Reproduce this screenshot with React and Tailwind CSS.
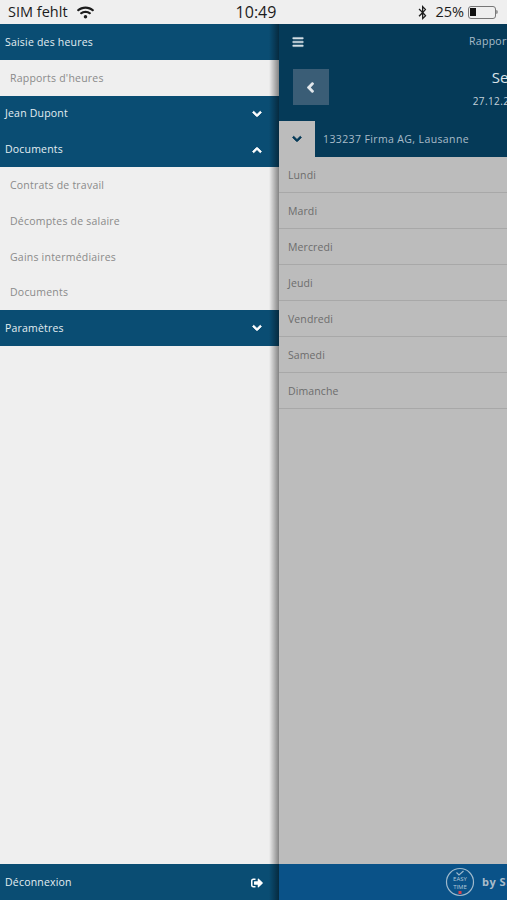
import { FaBars, FaBluetoothB, FaChevronDown, FaChevronLeft, FaChevronUp, FaSignOutAlt, FaWifi } from "react-icons/fa"

const font = { fontFamily: '"Open Sans", sans-serif' }
const docs = ["Contrats de travail", "Décomptes de salaire", "Gains intermédiaires", "Documents"]
const days = ["Lundi", "Mardi", "Mercredi", "Jeudi", "Vendredi", "Samedi", "Dimanche"]

const Head = ({ label, icon }) => (
  <div className="h-[35.75px] shrink-0 flex items-center justify-between pl-[5px] pr-[16px] pt-[1px] bg-[#0a4d73] text-[#e4edf2] text-[10.5px] tracking-[0.2px]">
    <span>{label}</span>
    {icon}
  </div>
)

const Item = ({ label }) => (
  <div className="h-[35.75px] shrink-0 flex items-center pl-[10px] pt-[2px] text-[#8a8a8a] text-[10.5px] tracking-[0.22px]">{label}</div>
)

const Chevron = ({ up }) => {
  const Icon = up ? FaChevronUp : FaChevronDown
  return <Icon className="mr-[1px] text-[10px] text-white" stroke="currentColor" strokeWidth={50} />
}

const EasyTime = () => (
  <svg width="30" height="30" viewBox="0 0 30 30" fill="none">
    <circle cx="15" cy="15" r="13.5" stroke="#9fb9cc" strokeWidth="1.2" />
    <path d="M11.5 5.5l2.5 2.5 4.5-4" stroke="#9fb9cc" strokeWidth="1.2" />
    <text x="15" y="14" textAnchor="middle" fontSize="6" fill="#b5c9d8" fontFamily="Open Sans">EASY</text>
    <text x="15" y="21.5" textAnchor="middle" fontSize="6" fill="#b5c9d8" fontFamily="Open Sans">TIME</text>
    <rect x="13.5" y="24" width="3" height="3" fill="#d9404a" />
  </svg>
)

const App = () => {
  return (
    <div className="w-[507px] h-[900px] flex flex-col overflow-hidden bg-[#efefef]" style={font}>
      {/* status bar */}
      <div className="h-6 shrink-0 flex items-center justify-between pl-[8px] pr-[9px] text-[#1c1c1c] text-[14.5px] bg-[#efefef]">
        <div className="flex items-center gap-[9px] w-[196px]">
          <span>SIM fehlt</span>
          <FaWifi className="text-[17px]" />
        </div>
        <span className="text-[16px] font-medium">10:49</span>
        <div className="flex items-center justify-end w-[190px]">
          <FaBluetoothB className="text-[15px] mr-[5px]" />
          <span>25%</span>
          <div className="ml-[4px] w-[28px] h-[13px] border border-[#777] rounded-[3px] p-[1.5px]">
            <div className="w-[6px] h-full bg-[#111]"></div>
          </div>
          <div className="w-[2px] h-[4px] bg-[#999] rounded-r"></div>
        </div>
      </div>

      <div className="flex flex-1 min-h-0">
        {/* side menu */}
        <div className="relative w-[279px] shrink-0 flex flex-col bg-[#efefef]">
          <Head label="Saisie des heures" />
          <Item label="Rapports d'heures" />
          <Head label="Jean Dupont" icon={<Chevron />} />
          <Head label="Documents" icon={<Chevron up />} />
          {docs.map((item, index) => <Item key={index} label={item} />)}
          <Head label="Paramètres" icon={<Chevron />} />
          <div className="flex-1"></div>
          <Head label="Déconnexion" icon={<FaSignOutAlt className="text-[12px] text-white" />} />
          <div className="absolute top-0 bottom-0 right-0 w-[10px] bg-gradient-to-r from-transparent to-black/45"></div>
        </div>

        {/* main panel, darkened behind the menu */}
        <div className="w-[507px] shrink-0 flex flex-col bg-[#bcbcbc]">
          <div className="h-[133px] shrink-0 flex flex-col bg-[#053a58] text-[#c3d0d9]">
            <div className="h-9 shrink-0 flex items-center text-[10.5px] tracking-[0.3px] text-[#a9bcc9]">
              <FaBars className="ml-[13px] text-[12px] text-[#d5dfe5]" stroke="currentColor" strokeWidth={20} />
              <span className="ml-[165px]">Rapports d'heures</span>
            </div>
            <div className="h-[61px] shrink-0 flex items-start">
              <div className="ml-[14px] mt-[9px] w-9 h-9 bg-[#3a5d76] flex items-center justify-center">
                <FaChevronLeft className="mr-[2px] text-[11px] text-[#e4e9ed]" stroke="currentColor" strokeWidth={50} />
              </div>
              <div className="flex-1 mr-[50px] flex flex-col items-center pt-[7px]">
                <span className="text-[15px] leading-[20px] text-[#dbe3e8]">Semaine 52</span>
                <span className="mt-[6px] text-[10px] leading-[16px] tracking-[0.4px]">27.12.2021 - 02.01.2022</span>
              </div>
            </div>
            <div className="h-9 shrink-0 flex items-center">
              <div className="w-9 h-9 bg-[#bcbcbc] flex items-center justify-center">
                <FaChevronDown className="text-[10px] text-[#053a58]" stroke="currentColor" strokeWidth={50} />
              </div>
              <span className="ml-2 pt-[1px] text-[10.5px] tracking-[0.38px] text-[#a9bcc9]">133237 Firma AG, Lausanne</span>
            </div>
          </div>
          <div className="flex-1">
            {days.map((day, index) => (
              <div key={index} className="h-9 flex items-center pl-[9px] pt-[2px] border-b border-[#a8a8a8] text-[#6c6c6c] text-[10.5px] tracking-[0.1px]">{day}</div>
            ))}
          </div>
          <div className="h-[35.75px] shrink-0 flex items-center bg-[#0a5288] pl-[166px]">
            <EasyTime />
            <span className="ml-[7px] text-[#a9bcc9] text-[11px] font-bold tracking-[0.5px]">by Si</span>
          </div>
        </div>
      </div>
    </div>
  )
}

export default App
